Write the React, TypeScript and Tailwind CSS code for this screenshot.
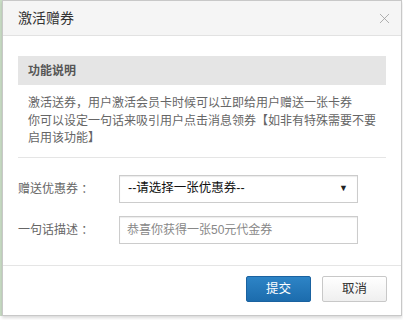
import { X } from 'lucide-react';

const FONT = { fontFamily: '"Liberation Sans", "Noto Sans CJK SC", sans-serif' };

export default function App() {
  return (
    <div className="w-[403px] h-[320px] bg-white flex" style={FONT}>
      {/* left page strip */}
      <div className="w-[2px] h-[316px] bg-[#c9ddc5]" />

      {/* dialog */}
      <div className="w-[400px] h-[316px] flex flex-col bg-white border border-[#c8c8c8] shadow-[0_2px_3px_rgba(0,0,0,0.15)]">
        {/* Header */}
        <div className="h-[35px] shrink-0 flex items-center justify-between pl-[15px] pr-[8px] bg-[#f5f5f5] border-b border-[#e2e2e2]">
          <span className="text-[14px] text-[#333]">激活赠券</span>
          <X size={17} strokeWidth={1.1} className="text-[#9a9a9a]" />
        </div>

        {/* Body */}
        <div className="flex-1 px-[15px] pt-[20px]">
          <div className="h-[29px] flex items-center pl-[10px] bg-[#e5e5e5] text-[12px] font-bold text-[#555]">功能说明</div>
          <div className="px-[10px] pt-[10px] pb-[9px] text-[12px] leading-[17.5px] text-[#666] border-b border-[#e5e5e5]">
            <p>激活送券，用户激活会员卡时候可以立即给用户赠送一张卡券</p>
            <p>你可以设定一句话来吸引用户点击消息领券【如非有特殊需要不要启用该功能】</p>
          </div>

          <div className="pt-[17px] flex flex-col gap-[13px]">
            <div className="flex items-center">
              <label className="w-[101px] text-[12px] text-[#666]">赠送优惠券 ：</label>
              <div className="w-[239px] h-[28px] flex items-center justify-between pl-[8px] pr-[9px] border border-[#ccc] shadow-[inset_0_1px_1px_rgba(0,0,0,0.08)]">
                <span className="text-[12.5px] text-[#111]">--请选择一张优惠券--</span>
                <span className="text-[9px] text-[#222]">▼</span>
              </div>
            </div>
            <div className="flex items-center">
              <label className="w-[101px] text-[12px] text-[#666]">一句话描述 ：</label>
              <div className="w-[239px] h-[28px] flex items-center pl-[7px] border border-[#ccc] shadow-[inset_0_1px_1px_rgba(0,0,0,0.08)]">
                <span className="text-[12px] text-[#888]">恭喜你获得一张50元代金券</span>
              </div>
            </div>
          </div>
        </div>

        {/* Footer */}
        <div className="h-[50px] shrink-0 flex items-start justify-end gap-[11px] pt-[10px] pr-[14px] border-t border-[#e5e5e5]">
          <button className="w-[65px] h-[26px] rounded-[2px] text-[12.5px] text-white bg-gradient-to-b from-[#2d84c6] to-[#1c6cad] border border-[#1a62a0]">提交</button>
          <button className="w-[65px] h-[26px] rounded-[2px] text-[12.5px] text-[#333] bg-gradient-to-b from-white to-[#efefef] border border-[#c8c8c8]">取消</button>
        </div>
      </div>
    </div>
  );
}
